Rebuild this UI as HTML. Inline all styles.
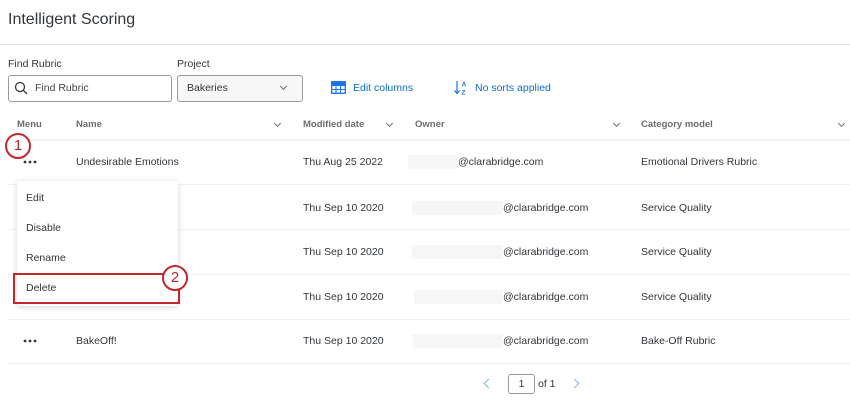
<!DOCTYPE html><html><head><style>
body{margin:0;width:850px;height:414px;background:#fff;font-family:"Liberation Sans",sans-serif;color:#32363a;position:relative;overflow:hidden;font-size:10.5px}
.a{position:absolute;white-space:nowrap}
.hl{position:absolute;left:8px;right:0;height:2px;background:#f0f0f0}
.hd{font-size:9.5px;color:#6a6d70;font-weight:bold}
.chev{position:absolute;width:4px;height:4px;border-right:1px solid #6a6d70;border-bottom:1px solid #6a6d70;transform:rotate(45deg)}
.blur{position:absolute;background:#f6f6f6;height:14px}
.dots{position:absolute}
</style></head><body>
<div class="a" style="left:8px;top:11px;font-size:16px;color:#32363a">Intelligent Scoring</div>
<div style="position:absolute;left:0;right:0;top:44px;height:1px;background:#e5e5e5"></div>
<div class="a" style="left:8px;top:58px;font-size:10.5px">Find Rubric</div>
<div class="a" style="left:177px;top:58px;font-size:10.5px">Project</div>
<div style="position:absolute;left:8px;top:75px;width:162px;height:25px;border:1px solid #999;border-radius:3px"></div>
<svg class="a" style="left:14px;top:81px" width="14" height="14"><circle cx="6" cy="6" r="4.5" fill="none" stroke="#32363a" stroke-width="1.3"/><path d="M9.3 9.3L13 13" stroke="#32363a" stroke-width="1.3"/></svg>
<div class="a" style="left:35px;top:82px;color:#444">Find Rubric</div>
<div style="position:absolute;left:177px;top:75px;width:124px;height:25px;border:1px solid #999;border-radius:3px;background:#f7f7f7"></div>
<div class="a" style="left:187px;top:82px">Bakeries</div>
<div class="chev" style="left:281px;top:84px"></div>
<svg class="a" style="left:331px;top:81px" width="15" height="13"><rect x="0.7" y="0.7" width="13.6" height="11.6" fill="none" stroke="#1a73e8" stroke-width="1.3"/><path d="M0.7 4.5H14.3M0.7 8.5H14.3M5 4.5V12.3M9.5 4.5V12.3" stroke="#1a73e8" stroke-width="1.1"/><rect x="0.7" y="0.7" width="13.6" height="3.8" fill="#1a73e8"/></svg>
<div class="a" style="left:353px;top:82px;color:#0b6bdc">Edit columns</div>
<svg class="a" style="left:454px;top:80px" width="14" height="16"><path d="M3 1V13M0.5 10.5L3 13.5L5.5 10.5" fill="none" stroke="#1a73e8" stroke-width="1.2"/><text x="7.5" y="6.5" font-size="6.5" fill="#1a73e8" font-family="Liberation Sans" font-weight="bold">A</text><text x="7.5" y="14.5" font-size="6.5" fill="#1a73e8" font-family="Liberation Sans" font-weight="bold">Z</text></svg>
<div class="a" style="left:475px;top:82px;color:#0b6bdc">No sorts applied</div>
<div class="a hd" style="left:17px;top:119px">Menu</div>
<div class="a hd" style="left:76px;top:119px">Name</div>
<div class="chev" style="left:275px;top:121px"></div>
<div class="a hd" style="left:303px;top:119px">Modified date</div>
<div class="chev" style="left:387px;top:121px"></div>
<div class="a hd" style="left:415px;top:119px">Owner</div>
<div class="chev" style="left:614px;top:121px"></div>
<div class="a hd" style="left:641px;top:119px">Category model</div>
<div class="chev" style="left:839px;top:121px"></div>
<div class="hl" style="top:139px"></div>
<div class="hl" style="top:184px;height:1px"></div>
<div class="hl" style="top:229px;height:1px"></div>
<div class="hl" style="top:274px;height:1px"></div>
<div class="hl" style="top:319px;height:1px"></div>
<div class="hl" style="top:363px;height:1px"></div>
<svg class="dots" style="left:23px;top:160px" width="14" height="4"><circle cx="2" cy="2" r="1.4" fill="#32363a"/><circle cx="7" cy="2" r="1.4" fill="#32363a"/><circle cx="12" cy="2" r="1.4" fill="#32363a"/></svg>
<div class="a" style="left:76px;top:156px">Undesirable Emotions</div>
<div class="a" style="left:303px;top:156px">Thu Aug 25 2022</div>
<div class="blur" style="left:408px;top:155px;width:50px"></div>
<div class="a" style="left:458px;top:156px">@clarabridge.com</div>
<div class="a" style="left:641px;top:156px">Emotional Drivers Rubric</div>
<div class="a" style="left:303px;top:202px">Thu Sep 10 2020</div>
<div class="blur" style="left:412px;top:201px;width:91px"></div>
<div class="a" style="left:503px;top:202px">@clarabridge.com</div>
<div class="a" style="left:641px;top:202px">Service Quality</div>
<div class="a" style="left:303px;top:246px">Thu Sep 10 2020</div>
<div class="blur" style="left:412px;top:245px;width:91px"></div>
<div class="a" style="left:503px;top:246px">@clarabridge.com</div>
<div class="a" style="left:641px;top:246px">Service Quality</div>
<div class="a" style="left:303px;top:291px">Thu Sep 10 2020</div>
<div class="blur" style="left:414px;top:290px;width:89px"></div>
<div class="a" style="left:503px;top:291px">@clarabridge.com</div>
<div class="a" style="left:641px;top:291px">Service Quality</div>
<svg class="dots" style="left:23px;top:339px" width="14" height="4"><circle cx="2" cy="2" r="1.4" fill="#32363a"/><circle cx="7" cy="2" r="1.4" fill="#32363a"/><circle cx="12" cy="2" r="1.4" fill="#32363a"/></svg>
<div class="a" style="left:76px;top:335px">BakeOff!</div>
<div class="a" style="left:303px;top:335px">Thu Sep 10 2020</div>
<div class="blur" style="left:413px;top:334px;width:90px"></div>
<div class="a" style="left:503px;top:335px">@clarabridge.com</div>
<div class="a" style="left:641px;top:335px">Bake-Off Rubric</div>
<div style="position:absolute;left:17px;top:181px;width:161px;height:125px;background:#fff;border-radius:3px;box-shadow:0 1px 6px rgba(0,0,0,.18)"></div>
<div class="a" style="left:26px;top:192px">Edit</div>
<div class="a" style="left:26px;top:222px">Disable</div>
<div class="a" style="left:26px;top:252px">Rename</div>
<div class="a" style="left:26px;top:282px">Delete</div>
<div style="position:absolute;left:13px;top:273px;width:167px;height:31px;border:2.5px solid #c1272d;box-sizing:border-box"></div>
<div class="a" style="left:162px;top:265px;width:22px;height:22px;border:2px solid #c1272d;border-radius:50%;background:#fff;text-align:center;line-height:22px;font-size:15px;color:#c1272d">2</div>
<div class="a" style="left:5px;top:133px;width:22px;height:22px;border:2px solid #c1272d;border-radius:50%;background:#fff;text-align:center;line-height:22px;font-size:15px;color:#c1272d">1</div>
<div class="chev" style="left:485px;top:380px;transform:rotate(135deg);border-color:#8ab4e8;width:6px;height:6px"></div>
<div style="position:absolute;left:508px;top:374px;width:25px;height:18px;border:1px solid #999;border-radius:3px;text-align:center;line-height:18px">1</div>
<div class="a" style="left:538px;top:378px">of 1</div>
<div class="chev" style="left:571px;top:380px;transform:rotate(-45deg);border-color:#8ab4e8;width:6px;height:6px"></div>
</body></html>
